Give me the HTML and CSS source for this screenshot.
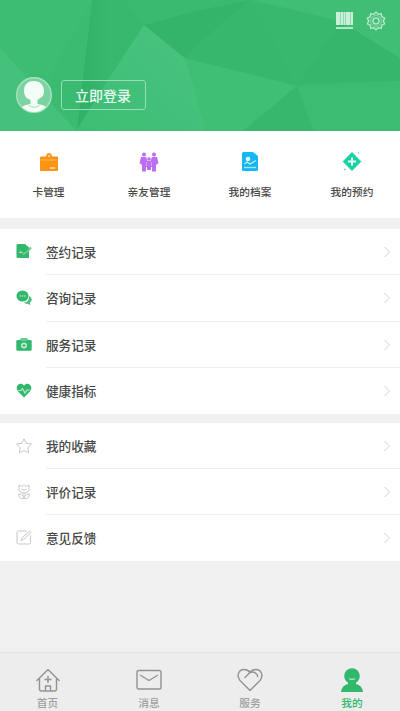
FILE: index.html
```html
<!DOCTYPE html>
<html lang="zh-CN">
<head>
<meta charset="utf-8">
<title>我的</title>
<link rel="stylesheet" href="styles.css">
</head>
<body>
<div class="app">
  <header class="hero">
    <svg class="facets" viewBox="0 0 400 131" preserveAspectRatio="none" aria-hidden="true">
      <defs>
        <linearGradient id="fold" x1="0" x2="1"><stop offset="0" stop-color="#2fb067"/><stop offset=".5" stop-color="#38b86e"/></linearGradient>
        <linearGradient id="light" x1="0" y1="1" x2="1" y2="0"><stop offset="0" stop-color="#3cbd74"/><stop offset="1" stop-color="#4ac481"/></linearGradient>
      </defs>
      <rect width="400" height="131" fill="#3cbd73"/>
      <path d="M0 48L76 131H0Z" fill="#45c17c"/>
      <path d="M92 0H126L144 25L108 80L77 129Z" fill="url(#fold)"/>
      <path d="M92 0L84 62L77 129L42 90Z" fill="#3bbb71"/>
      <path d="M144 25L185 58L200 108L206 131H77L108 80Z" fill="url(#light)"/>
      <path d="M126 0H247L200 10L144 25Z" fill="#3aba70"/>
      <path d="M144 25L200 10L250 0L201 42L185 58Z" fill="#34b46b"/>
      <path d="M250 0L260 14L297 86L200 62L185 58L201 42Z" fill="#36b76d"/>
      <path d="M250 0L335 20L400 58V81L297 86L260 14Z" fill="#38b86e"/>
      <path d="M335 30L355 30L400 58V81L310 82L297 86Z" fill="#35b66c"/>
      <path d="M272 0H400V58L355 30L330 18L255 0Z" fill="#40be76"/>
      <path d="M185 58L200 62L297 86L243 131H206Z" fill="#3fbf76"/>
      <path d="M297 86L314 131H243Z" fill="#36b76d"/>
      <path d="M297 86L400 81V131H314Z" fill="#3cbc72"/>
    </svg>
    <div class="tools">
      <svg width="18" height="18" viewBox="0 0 18 18">
        <path d="M0 0h4v13H0zM5 0h2v13H5zM8 0h1v13H8zM10 0h4v13h-4zM15 0h2v13h-2z" fill="#d5f2e1"/>
        <path d="M0 0h17v13H0z" fill="#c4edd4" opacity=".6"/>
        <path d="M0 16h17" stroke="#b5e7c9" stroke-width="2"/>
      </svg>
      <svg width="20" height="20" viewBox="0 0 20 20" fill="none" stroke="#b5e7c9" stroke-width="1.5">
        <path d="M10 1.2L12.2 3.2L15.2 2.8L15.8 5.8L18.6 7.2L17.3 10L18.6 12.8L15.8 14.2L15.2 17.2L12.2 16.8L10 18.8L7.8 16.8L4.8 17.2L4.2 14.2L1.4 12.8L2.7 10L1.4 7.2L4.2 5.8L4.8 2.8L7.8 3.2Z"/>
        <circle cx="10" cy="10" r="5.5" stroke-width=".7"/>
        <circle cx="10" cy="10" r="3"/>
      </svg>
    </div>
    <div class="account">
      <svg class="avatar" width="38" height="38" viewBox="0 0 38 38">
        <defs><clipPath id="disc"><circle cx="19" cy="19" r="17"/></clipPath></defs>
        <circle cx="19" cy="19" r="17.3" fill="#7bd3a0" stroke="#a9e3c0" stroke-width="1.4"/>
        <g clip-path="url(#disc)" fill="#f3fcf6">
          <path d="M9 15C9 8 13 5 19 5C25 5 29 9 29 15C29 18 28 21 25 22C24 23 23 23.500 22.500 24V28C27 29 31 29 32 33V38H6V33C7 29 11 29 15.500 28V24C13 23 9 21 9 15Z"/>
          <path d="M13.500 29.500Q19 33 24.500 29.500" fill="none" stroke="#a5e1bc"/>
        </g>
      </svg>
      <button class="login">立即登录</button>
    </div>
  </header>

  <nav class="shortcuts">
    <a class="shortcut">
      <svg width="22" height="22" viewBox="0 0 22 22"><path d="M2.500 6H8L9.500 2.800H12.500L14 6H19.500V19.500H2.500Z" fill="#ff9414" stroke="#ff9414" stroke-linejoin="round"/><path d="M10 5h2" stroke="#fff"/><path d="M3 9h16" stroke="#ffb75e"/><path d="M12 17h5" stroke="#ffe1b8" stroke-width="1.500"/></svg>
      <span>卡管理</span>
    </a>
    <a class="shortcut">
      <svg width="22" height="22" viewBox="0 0 22 22" fill="#bd6df2"><circle cx="6" cy="3.500" r="2"/><circle cx="16" cy="3.500" r="2"/><circle cx="11" cy="8" r="1.800"/><path d="M3 6H8L9.500 10H12.500L14 6H19L20.500 12L18 14V20.500H14V16H13V19H9V16H8V20.500H4V14L1.500 12Z"/><path d="M8.500 11V15M13.500 11V15" stroke="#deb8f8" stroke-width=".7"/></svg>
      <span>亲友管理</span>
    </a>
    <a class="shortcut">
      <svg width="22" height="22" viewBox="0 0 22 22"><path d="M4.500 1H14L19 5V18.500Q19 20 17.500 20H4.500Q3 20 3 18.500V2.500Q3 1 4.500 1Z" fill="#16b8f3"/><circle cx="9" cy="8" r="2.300" fill="#e5f8ff"/><path d="M5.500 13L8 11L11 13L17 9.500" fill="none" stroke="#c4effe" stroke-width="1.200"/><path d="M5 16.500H17" stroke="#a3e5fb" stroke-width="1.300"/></svg>
      <span>我的档案</span>
    </a>
    <a class="shortcut">
      <svg width="22" height="22" viewBox="0 0 22 22"><path d="M11 1.500L19.800 10.500L11 19.500L2.200 10.500Z" fill="#1bcfa5" stroke="#1bcfa5" stroke-linejoin="round"/><path d="M11 6.500V14.500M7 10.500H15" stroke="#e0fbf4" stroke-width="2"/><path d="M17 2.500l1-1M3 18.500h2" stroke="#72dfc5" stroke-width="1.500"/></svg>
      <span>我的预约</span>
    </a>
  </nav>

  <section class="list">
    <a class="row">
      <svg class="icon" viewBox="0 0 16 16"><path d="M2 0H9L13 3.500V14H2Q.5 14 .5 13V1Q.5 0 2 0Z" fill="#32b86b"/><path d="M12 7L15 3.500" stroke="#70cd98" stroke-width="2"/><path d="M3 8.500H7M7 10.500L12 7M4 6.500L6 9.500" stroke="#a4dfbe" fill="none"/></svg>
      <span class="label">签约记录</span><svg class="chevron" viewBox="0 0 6 12"><path d="M.5 1L5.500 6L.5 11"/></svg>
    </a>
    <a class="row">
      <svg class="icon" viewBox="0 0 16 16"><ellipse cx="6.500" cy="6" rx="6" ry="5.500" fill="#32b86b"/><path d="M8 12.500C12 12.500 13 9 13 6C17 7.500 16 11.500 14 12.500V15L11.500 13.700Q9 14 8 12.500Z" fill="#4cc27f"/><path d="M3.500 6h6" stroke="#a4dfbe" stroke-dasharray="1.500 .8" stroke-width="1.300"/></svg>
      <span class="label">咨询记录</span><svg class="chevron" viewBox="0 0 6 12"><path d="M.5 1L5.500 6L.5 11"/></svg>
    </a>
    <a class="row">
      <svg class="icon" viewBox="0 0 16 16"><path d="M1.500 3H4L5 1.200H11L12 3H14.500Q15.700 3 15.700 4V12.500Q15.700 13.700 14.500 13.700H1.500Q.3 13.700 .3 12.500V4Q.3 3 1.500 3Z" fill="#32b86b"/><path d="M5 3h6" stroke="#a4dfbe"/><circle cx="8" cy="8.500" r="3" fill="#c0ead1"/><path d="M8 7v3M6.500 8.500h3" stroke="#32b86b"/></svg>
      <span class="label">服务记录</span><svg class="chevron" viewBox="0 0 6 12"><path d="M.5 1L5.500 6L.5 11"/></svg>
    </a>
    <a class="row">
      <svg class="icon" viewBox="0 0 16 16"><path d="M8 14.500L2 8.500C-2 3.500 4 -2 8 2.500C12 -2 18 3.500 14 8.500Z" fill="#32b86b"/><path d="M1.500 7.500H5L6.500 5.500L9 10L11 7H14" fill="none" stroke="#b5e6ca" stroke-width="1.200"/></svg>
      <span class="label">健康指标</span><svg class="chevron" viewBox="0 0 6 12"><path d="M.5 1L5.500 6L.5 11"/></svg>
    </a>
  </section>

  <section class="list secondary">
    <a class="row">
      <svg class="icon line" viewBox="0 0 16 16"><path d="M8 .8L10.300 5.300L15.500 6L11.800 9.700L12.700 14.800L8 12.600L3.300 14.800L4.200 9.700L.5 6L5.700 5.300Z"/></svg>
      <span class="label">我的收藏</span><svg class="chevron" viewBox="0 0 6 12"><path d="M.5 1L5.500 6L.5 11"/></svg>
    </a>
    <a class="row">
      <svg class="icon line" viewBox="0 0 16 16"><path d="M3 1L5.800 2.500L8 .8L10.200 2.500L13 1V6Q12 9 8 9Q4 9 3 6ZM8 9V15M8 14Q3 16 2.500 10Q6 9.500 8 13Q10 9.500 13.500 10Q13 16 8 14M5.500 5Q8 7.500 10.500 5"/></svg>
      <span class="label">评价记录</span><svg class="chevron" viewBox="0 0 6 12"><path d="M.5 1L5.500 6L.5 11"/></svg>
    </a>
    <a class="row">
      <svg class="icon line" viewBox="0 0 16 16"><path d="M10.500 1H2.500Q1 1 1 2.500V12.500Q1 14 2.500 14H13Q14.500 14 14.500 12.500V5.500M5 10.500L6 8L13.500 1L15 2.500L7.500 9.500Z"/></svg>
      <span class="label">意见反馈</span><svg class="chevron" viewBox="0 0 6 12"><path d="M.5 1L5.500 6L.5 11"/></svg>
    </a>
  </section>

  <nav class="tabs">
    <a class="tab">
      <svg width="26" height="26" viewBox="0 0 26 26"><path d="M1.500 14L13 2.500L24.500 14M4.500 12V22Q4.500 24 6.500 24H19.500Q21.500 24 21.500 22V12M13 9V16M9.500 12.500H16.500M10.500 24V19H15.500V24"/></svg>
      <span>首页</span>
    </a>
    <a class="tab">
      <svg width="26" height="26" viewBox="0 0 26 26"><rect x="1" y="3.500" width="24" height="18.500" rx="1.800"/><path d="M4 8L13 13.500L22 8"/></svg>
      <span>消息</span>
    </a>
    <a class="tab">
      <svg width="26" height="26" viewBox="0 0 26 26"><path d="M13 23.500L3 13.500C-1 8 2 2.500 7 2.500C10 2.500 12 4 13 5.500C14 4 16 2.500 19 2.500C24 2.500 27 8 23 13.500ZM7.500 11L13 5.500Q16 4 19 6.500Q21 8 20.500 10"/></svg>
      <span>服务</span>
    </a>
    <a class="tab active">
      <svg width="26" height="26" viewBox="0 0 26 26"><circle cx="13" cy="9" r="7.800"/><path d="M9 15H17V17Q23 18 24 25H2Q3 18 9 17Z"/><path class="smile" d="M10 11.500Q13 13.500 16 11.500"/></svg>
      <span>我的</span>
    </a>
  </nav>
</div>
</body>
</html>
```
FILE: styles.css
```css
* { box-sizing: border-box; }

body {
  margin: 0;
  background: #f0f0f0;
  color: #484848;
  font-family: "Noto Sans CJK SC", sans-serif;
}

svg { display: block; flex: none; }

.app {
  display: flex;
  flex-direction: column;
  width: 400px;
  height: 711px;
  overflow: hidden;
}

.hero {
  position: relative;
  display: flex;
  flex: none;
  flex-direction: column;
  justify-content: space-between;
  height: 131px;
  padding: 11px 14px 17px 15px;
}

.facets {
  position: absolute;
  inset: 0;
  width: 100%;
  height: 100%;
}

.tools,
.account {
  position: relative;
  display: flex;
  align-items: center;
}

.tools {
  justify-content: flex-end;
  gap: 12px;
}

.account { gap: 8px; }

.login {
  width: 85px;
  height: 30px;
  padding: 0 1px 1px 0;
  border: 1.5px solid #9bdcb6;
  border-radius: 3px;
  background: none;
  color: #e8f9ef;
  font: 500 14px/26px "Noto Sans CJK SC", sans-serif;
}

.shortcuts {
  display: grid;
  flex: none;
  grid-template-columns: 97px 104px 98px 106px;
  height: 87px;
  background: #fff;
}

.shortcut {
  display: flex;
  flex-direction: column;
  align-items: center;
  gap: 11px;
  padding-top: 20px;
  font-size: 10.7px;
  font-weight: 500;
  line-height: 16px;
}

.list {
  flex: none;
  margin-top: 11px;
  background: #fff;
}

.row {
  display: flex;
  align-items: center;
  height: 46.25px;
  padding-left: 16px;
  background: linear-gradient(#efefef, #efefef) 46px 100% / 100% 1px no-repeat;
}

.secondary { margin-top: 8.5px; }

.secondary .row { height: 46.1px; }

.row:last-child { background: none; }

.icon {
  width: 16px;
  height: 16px;
  margin-right: 14px;
}

.icon.line {
  fill: none;
  stroke: #c7c7c7;
  stroke-linejoin: round;
}

.label {
  flex: 1;
  font-size: 12.6px;
  font-weight: 500;
  line-height: 46px;
}

.chevron {
  width: 6px;
  height: 12px;
  margin-right: 10px;
  fill: none;
  stroke: #d2d2d2;
}

.tabs {
  display: grid;
  flex: none;
  grid-template-columns: 95px 108px 94px 110px;
  height: 59px;
  margin-top: auto;
  border-top: 1px solid #e2e2e2;
  background: #ededed;
}

.tab {
  display: flex;
  flex-direction: column;
  align-items: center;
  gap: 2px;
  padding-top: 14px;
  color: #a0a0a0;
  font-size: 10.7px;
  font-weight: 500;
  line-height: 16px;
}

.tab svg {
  fill: none;
  stroke: #929292;
  stroke-width: 1.4;
  stroke-linejoin: round;
}

.tab.active { color: #32b86b; }

.tab.active svg {
  fill: #32b86b;
  stroke: none;
}

.tab.active .smile {
  fill: none;
  stroke: #bce8cf;
}
```
